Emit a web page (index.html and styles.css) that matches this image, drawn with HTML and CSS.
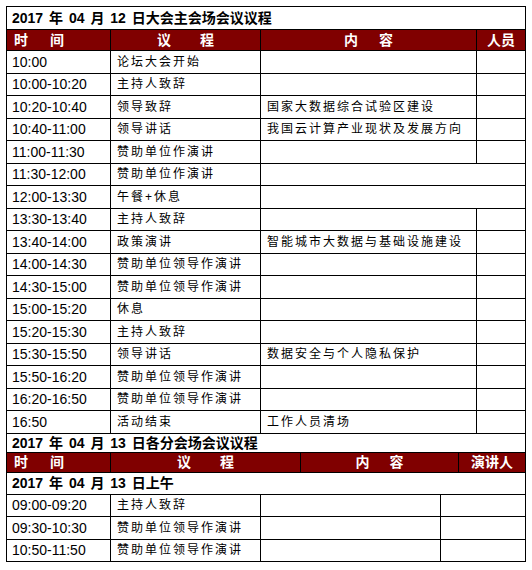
FILE: index.html
```html
<!DOCTYPE html>
<html lang="zh-CN">
<head>
<meta charset="utf-8">
<title>会议议程</title>
<link rel="stylesheet" href="styles.css">
</head>
<body>
<div class="page">
  <table class="sched t1">
    <colgroup><col class="w-time"><col class="w-item1"><col class="w-content1"><col class="w-person1"></colgroup>
    <tr class="title"><td colspan="4">2017 年 04 月 12 日大会主会场会议议程</td></tr>
    <tr class="head">
      <th class="h-time">时间</th>
      <th class="h-item">议程</th>
      <th class="h-content">内容</th>
      <th class="h-person">人员</th>
    </tr>
    <tr><td class="time">10:00</td><td class="cn">论坛大会开始</td><td></td><td></td></tr>
    <tr><td class="time">10:00-10:20</td><td class="cn">主持人致辞</td><td></td><td></td></tr>
    <tr><td class="time">10:20-10:40</td><td class="cn">领导致辞</td><td class="cn">国家大数据综合试验区建设</td><td></td></tr>
    <tr><td class="time">10:40-11:00</td><td class="cn">领导讲话</td><td class="cn">我国云计算产业现状及发展方向</td><td></td></tr>
    <tr><td class="time">11:00-11:30</td><td class="cn">赞助单位作演讲</td><td></td><td></td></tr>
    <tr><td class="time">11:30-12:00</td><td class="cn">赞助单位作演讲</td><td colspan="2"></td></tr>
    <tr><td class="time">12:00-13:30</td><td class="cn">午餐+休息</td><td colspan="2"></td></tr>
    <tr><td class="time">13:30-13:40</td><td class="cn">主持人致辞</td><td></td><td></td></tr>
    <tr><td class="time">13:40-14:00</td><td class="cn">政策演讲</td><td class="cn">智能城市大数据与基础设施建设</td><td></td></tr>
    <tr><td class="time">14:00-14:30</td><td class="cn">赞助单位领导作演讲</td><td></td><td></td></tr>
    <tr><td class="time">14:30-15:00</td><td class="cn">赞助单位领导作演讲</td><td></td><td></td></tr>
    <tr><td class="time">15:00-15:20</td><td class="cn">休息</td><td></td><td></td></tr>
    <tr><td class="time">15:20-15:30</td><td class="cn">主持人致辞</td><td></td><td></td></tr>
    <tr><td class="time">15:30-15:50</td><td class="cn">领导讲话</td><td class="cn">数据安全与个人隐私保护</td><td></td></tr>
    <tr><td class="time">15:50-16:20</td><td class="cn">赞助单位领导作演讲</td><td></td><td></td></tr>
    <tr><td class="time">16:20-16:50</td><td class="cn">赞助单位领导作演讲</td><td></td><td></td></tr>
    <tr><td class="time">16:50</td><td class="cn">活动结束</td><td class="cn">工作人员清场</td><td></td></tr>
  </table>

  <table class="sched t2">
    <colgroup><col class="w-time"><col class="w-item2"><col class="w-content2"><col class="w-person2"></colgroup>
    <tr class="title title2"><td colspan="4">2017 年 04 月 13 日各分会场会议议程</td></tr>
    <tr class="head head2">
      <th class="h-time">时间</th>
      <th class="h-item">议程</th>
      <th class="h-content2">内容</th>
      <th class="h-person">演讲人</th>
    </tr>
  </table>

  <table class="sched t3">
    <colgroup><col class="w-time"><col class="w-item1"><col class="w-content3"><col class="w-person3"></colgroup>
    <tr class="title subtitle"><td colspan="4">2017 年 04 月 13 日上午</td></tr>
    <tr><td class="time">09:00-09:20</td><td class="cn">主持人致辞</td><td></td><td></td></tr>
    <tr><td class="time">09:30-10:30</td><td class="cn">赞助单位领导作演讲</td><td></td><td></td></tr>
    <tr><td class="time">10:50-11:50</td><td class="cn">赞助单位领导作演讲</td><td></td><td></td></tr>
  </table>
</div>
</body>
</html>
```

FILE: styles.css
```css
html, body {
  margin: 0;
  padding: 0;
  background: #ffffff;
}

.page {
  padding: 6px;
  font-family: "Liberation Sans", "Noto Sans CJK SC", sans-serif;
  color: #000000;
}

.sched {
  border-collapse: collapse;
  table-layout: fixed;
  width: 519px;
}

.t2, .t3 {
  margin-top: -1px;
}

.sched td,
.sched th {
  border: 1px solid #000000;
  padding: 0 0 0 5px;
  height: 22.5px;
  line-height: 16px;
  font-size: 14px;
  text-align: left;
  vertical-align: middle;
  white-space: nowrap;
  overflow: hidden;
  box-sizing: border-box;
}

.w-time { width: 104px; }
.w-item1 { width: 150px; }
.w-content1 { width: 216px; }
.w-person1 { width: 49px; }

.w-item2 { width: 190px; }
.w-content2 { width: 158px; }
.w-person2 { width: 67px; }

.w-content3 { width: 180px; }
.w-person3 { width: 85px; }

.title td {
  font-weight: bold;
  height: 23px;
  word-spacing: 2px;
}

.title2 td {
  height: 19px;
}

.subtitle td {
  height: 22px;
}

.head th {
  background: #800000;
  color: #ffffff;
  font-weight: bold;
  height: 21px;
  padding: 0;
}

.head2 th {
  height: 20px;
}

.head .h-time {
  text-align: left;
  padding-left: 7px;
  letter-spacing: 22px;
}

.head .h-item {
  text-align: center;
  letter-spacing: 29px;
  padding-left: 29px;
}

.head .h-content {
  text-align: center;
  letter-spacing: 21px;
  padding-left: 21px;
}

.head .h-content2 {
  text-align: center;
  letter-spacing: 20px;
  padding-left: 20px;
}

.head .h-person {
  text-align: center;
}

.sched td.cn {
  font-size: 12px;
  letter-spacing: 2px;
  padding-left: 6px;
}
```
